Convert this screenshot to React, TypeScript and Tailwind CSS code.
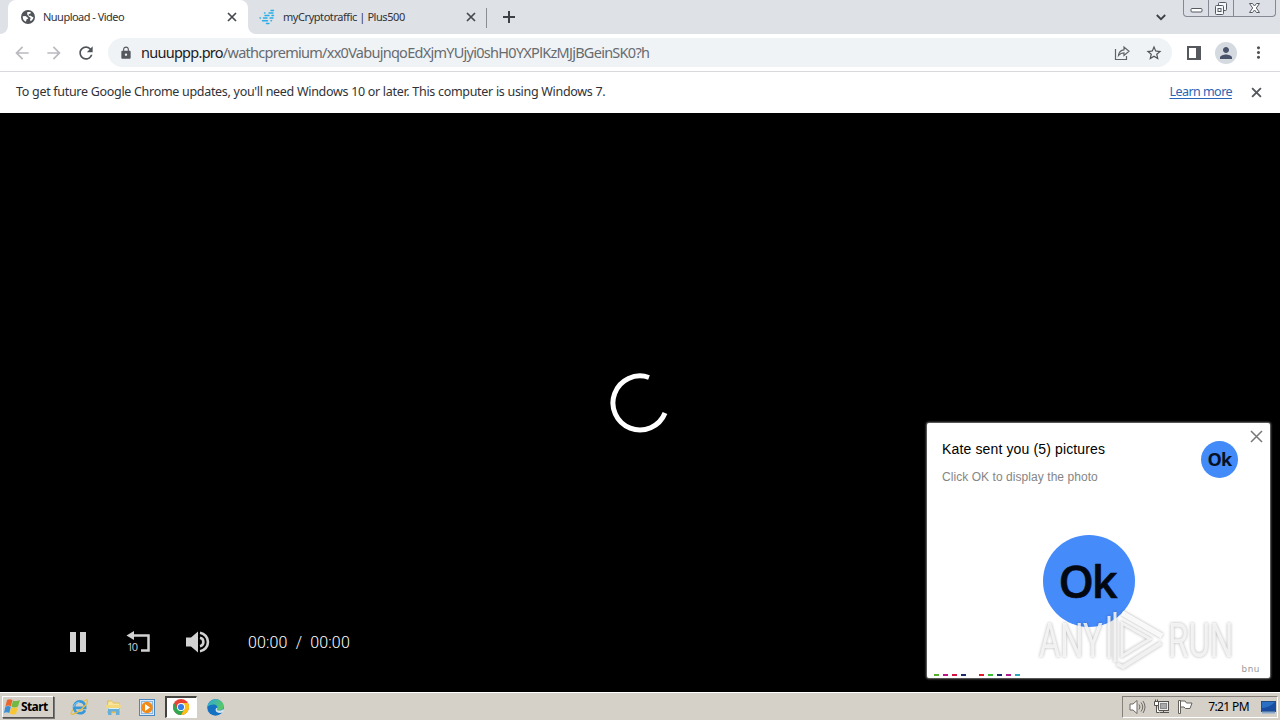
import type { ReactNode } from "react";
import {
  MdArrowBack,
  MdArrowForward,
  MdLock,
  MdMoreVert,
  MdPerson,
  MdRefresh,
  MdStarBorder,
} from "react-icons/md";

/* ─── Browser icons ─── */
const GlobeIcon = () => (
  <svg width="14" height="14" viewBox="0 0 14 14">
    <circle cx="7" cy="7" r="7" fill="#505357" />
    <path d="M1.700 6.200 4.500 6l1.800 1.200 1 1.300-1.700.7L5 11.800C3 11 1.600 9.200 1.700 6.200zM6.300 2h3.200l.4 1.300-2.300.9.200 1.500 2 .1 1.600 1.300 1-.3c0 2-1.200 3.700-2.900 4.500l-.5-1.900.8-1.500-2-1.500-1.600-1.900z" fill="#fff" />
  </svg>
);

const PlusStripes = () => (
  <svg width="16" height="17" viewBox="0 0 16 17" stroke="#27aee8" strokeWidth="1.400" strokeLinecap="round">
    <path d="M12 1.500h2.500M5.500 4h.5M10 4h4M6 6.500h4M13 6.500h1.500M1 9h.5M4.500 9h3.500M11 9h3M3.500 11.700h5M12 11.700h.5M7.500 14.500h2.500" />
  </svg>
);

const ShareIcon = () => (
  <svg width="16" height="16" viewBox="0 0 16 16" fill="none" stroke="#5f6368" strokeWidth="1.200">
    <path d="M1.500 4v10.500h11V11" />
    <path d="M4.500 10.500C5 6.500 7 5 10 4.800V2l5 4.300-5 4.200V7.800c-2.500 0-4 .8-5.500 2.700z" />
  </svg>
);

const CrossIcon = ({ size, color }: { size: number; color: string }) => (
  <svg width={size} height={size} viewBox="0 0 10 10" stroke={color} strokeWidth="1.700">
    <path d="m1 1 8 8M9 1 1 9" />
  </svg>
);

const TabCurve = ({ flip = false }: { flip?: boolean }) => (
  <svg width="8" height="8" viewBox="0 0 8 8" className={flip ? "-scale-x-100" : ""}>
    <path d="M8 0v8H0a8 8 0 0 0 8-8z" fill="#fff" />
  </svg>
);

const WindowButtons = () => (
  <div className="flex h-[17px] w-[93px] rounded-b-[4px] border border-t-0 border-[#858993] bg-[#dcdfe5]">
    <div className="flex w-[25px] justify-center border-r border-[#858993]">
      <svg width="13" height="16" viewBox="0 0 13 16">
        <rect x="1" y="8.500" width="11" height="3.500" rx="1" fill="#fff" stroke="#555963" />
      </svg>
    </div>
    <div className="flex w-[25px] justify-center border-r border-[#858993]">
      <svg width="14" height="16" viewBox="0 0 14 16" fill="#f7f8fa" stroke="#555963">
        <rect x="4.500" y="2.500" width="8" height="8" rx="1" />
        <rect x="1.500" y="5.500" width="8" height="9" rx="1" />
        <rect x="4" y="8.500" width="3" height="3" />
      </svg>
    </div>
    <div className="flex flex-1 justify-center">
      <svg width="13" height="16" viewBox="0 0 13 16">
        <path d="M1.500 3.500h3l2 2.500 2-2.500h3L8.300 8l3.200 4.500h-3l-2-2.500-2 2.500h-3L4.700 8z" fill="#fff" stroke="#555963" />
      </svg>
    </div>
  </div>
);

/* ─── Player icons ─── */
const PauseIcon = () => (
  <svg width="16" height="20" viewBox="0 0 16 20" fill="#d2d2d2">
    <path d="M0 0h6v20H0zM10 0h6v20h-6z" />
  </svg>
);

const RewindIcon = () => (
  <svg width="25" height="23" viewBox="0 0 25 23">
    <path d="M6 4.500h16.500v15h-7.500" fill="none" stroke="#d2d2d2" strokeWidth="2.500" />
    <path d="M8 0v9L.5 4.500z" fill="#d2d2d2" />
    <text x="1" y="20" fontSize="11" fill="#d2d2d2" fontFamily="Open Sans, sans-serif" textLength="11">10</text>
  </svg>
);

const VolumeIcon = () => (
  <svg width="25" height="22" viewBox="0 0 25 22">
    <path d="M0 6.500h5L12 .5v21l-7-6H0z" fill="#d2d2d2" />
    <g fill="none" stroke="#d2d2d2" strokeWidth="2.600">
      <path d="M14 6.800a4.300 4.300 0 0 1 0 8.400" />
      <path d="M14 1.800a9.300 9.300 0 0 1 0 18.400" />
    </g>
  </svg>
);

/* ─── Taskbar icons ─── */
const WindowsFlag = () => (
  <svg width="17" height="16" viewBox="0 0 17 16">
    <path d="M3 1c2-1.200 3.700-1 5.500 0L7 7.300C5.300 6.300 3.500 6.200 1.500 7.300z" fill="#e8662c" />
    <path d="M9 1.400c2 1 3.800 1 7-.4L14 7.500c-2.300 1.200-4.500 1.200-6.500.2z" fill="#72b944" />
    <path d="M1.300 7.800c2-1.100 3.700-1 5.500 0l-1.500 6.300c-1.800-1-3.600-1-5.300 0z" fill="#3c8fd4" />
    <path d="M7.300 8.200c2 1 4.100 1 6.400-.2l-1.500 6.500c-2.300 1.200-4.400 1.200-6.400.1z" fill="#f8c62e" />
  </svg>
);

const ExplorerIcon = () => (
  <svg width="18" height="18" viewBox="0 0 18 18" fill="none">
    <path d="M4.500 9.900h10.700c.2-4-2.300-6.500-5.400-6.500-3.300 0-5.800 2.600-5.800 6 0 3.500 2.500 5.900 5.800 5.900 2.500 0 4.300-1.200 5.100-3.100" stroke="#3697d9" strokeWidth="2.600" />
    <path d="M3.500 9.200c.7-3 3-5 6-5" stroke="#8fd2f4" />
    <path d="M14 3.300c2-1.700 3.300-1.700 3.500-.5.4 2.200-3.700 7-8.500 10.300-4 2.800-7.300 4-7.800 2.600-.3-.9.500-2.500 2-4.100" stroke="#e8bd3d" strokeWidth="1.300" />
  </svg>
);

const FolderIcon = () => (
  <svg width="17" height="17" viewBox="0 0 17 17">
    <path d="M2 1.500h5l1 2h6.500V14H2z" fill="#e6bd51" />
    <path d="M3.500 2.500h3.500l1 2h6l1.500 7H2z" fill="#f8e6a0" />
    <path d="M1 6h15l-1 5H2z" fill="#f4d879" />
    <path d="M3 9h11.500v7H11v-3.500H6.500V16H3z" fill="#68afd8" />
    <path d="M3.500 9.500h10.500" stroke="#d8f0fb" />
  </svg>
);

const MediaIcon = () => (
  <svg width="16" height="17" viewBox="0 0 16 17">
    <rect x=".5" y=".5" width="15" height="16" fill="#d9eafa" stroke="#4d87c0" />
    <rect x="2.500" y="2.500" width="11" height="12" fill="none" stroke="#8db7df" />
    <circle cx="8" cy="8.500" r="5.700" fill="#f18a17" />
    <path d="M6 5v7l5-3.500z" fill="#fff" />
  </svg>
);

const ChromeIcon = () => (
  <svg width="16" height="16" viewBox="0 0 16 16" className="-mt-px -ml-px">
    <circle cx="8" cy="8" r="8" fill="#e94235" />
    <path d="M1.070 4A8 8 0 0 0 8 16l3.500-6H4.540z" fill="#30a852" />
    <path d="M14.930 4H8l3.500 6L8 16A8 8 0 0 0 14.930 4z" fill="#fbc116" />
    <circle cx="8" cy="8" r="4" fill="#fff" />
    <circle cx="8" cy="8" r="3.100" fill="#347ee8" />
  </svg>
);

const EdgeIcon = () => (
  <svg width="17" height="17" viewBox="0 0 17 17">
    <defs>
      <linearGradient id="edge-top" x1="0" y1="0" x2="1" y2=".5">
        <stop stopColor="#2ea7de" />
        <stop offset="1" stopColor="#57c968" />
      </linearGradient>
    </defs>
    <circle cx="8.500" cy="8.500" r="8.300" fill="#1571c2" />
    <path d="M.3 8C1 3.200 4.500.2 8.600.2c4.700 0 8.200 3.400 8.200 6.900 0 2.700-2 4.400-4.400 4.400-2 0-3-.7-2.500-1.600 1.400-2.300-.3-4.500-3-4.500C4 5.400 1.600 6.500.3 8z" fill="url(#edge-top)" />
    <path d="M10 10c-.5 1 .6 1.600 2.400 1.600 1.500 0 2.800-.5 3.700-1.500l.9 1.700-1.400 1.700c-3 1-6.600.3-7-2.300 0-1 .3-1.900 1.100-2.400.9.700.8.700.3 1.200z" fill="#d5e5ee" />
  </svg>
);

const SpeakerIcon = () => (
  <svg width="17" height="16" viewBox="0 0 17 16" fill="none" stroke="#6d6a66">
    <path d="M1 5h3l4-3.500v13L4 11H1z" fill="#fff" />
    <path d="M10 5.500q2 2.500 0 5M12 3.500q3.500 4.500 0 9M14 2q4 6 0 12" />
  </svg>
);

const NetworkIcon = () => (
  <svg width="17" height="16" viewBox="0 0 17 16" fill="none" stroke="#55524f">
    <rect x="5.500" y="2.500" width="10" height="9" fill="#eee" />
    <rect x="7.500" y="4.500" width="6" height="5" fill="#aaa" stroke="#888" />
    <path d="M7 13.500h9M10.500 12v1" />
    <path d="M1.500 2.500h4v4h-4zM2.500 .5v2M4.500 .5v2M3.500 7v6.500h3" fill="#fff" />
  </svg>
);

const FlagIcon = () => (
  <svg width="17" height="16" viewBox="0 0 17 16" stroke="#65625e">
    <path d="M2 2h6l1.500 2H15l-2 5.500H8.500L7 8H3.500" fill="#fff" />
    <path d="M1.500 1.500h2v13h-2z" fill="#fff" />
  </svg>
);

const DesktopIcon = () => (
  <svg width="15" height="13" viewBox="0 0 15 13">
    <rect x=".5" y=".5" width="14" height="10" fill="#2b6fc4" stroke="#244e82" />
    <path d="M1 7c5 0 9-2 13-6v9H1z" fill="#174c9e" />
    <path d="M1 11.500h13" stroke="#86a5cd" strokeWidth="2" />
  </svg>
);

/* AnyRun stamp: pale words on both sides of a play mark */
const Stamp = () => (
  <svg width="200" height="64" viewBox="0 0 200 64" className="overflow-visible" style={{ filter: "drop-shadow(0 0 1.500px rgba(0,0,0,.35))" }}>
    <g fill="#f9f9f9" fillOpacity=".85" fontFamily="Roboto, sans-serif" fontSize="48">
      <text transform="translate(3 48) scale(.68 1)">ANY</text>
      <text transform="translate(132 48) scale(.69 1)">RUN</text>
    </g>
    <g fill="none" stroke="#f6f6f6" strokeOpacity=".9" strokeWidth="3">
      <path d="M73 7v42M79 3v50M86 14v33l28-17z" />
      <path d="M81 55l6 3 38-24" strokeWidth="4" />
      <path d="M86 4l40 23" stroke="#fff" strokeWidth="5" />
    </g>
  </svg>
);

const dashes = [
  "bg-[#58ad32]",
  "bg-[#bd138d]",
  "bg-[#d51243]",
  "bg-[#192c65]",
  "bg-transparent",
  "bg-[#df1830]",
  "bg-[#36bd35]",
  "bg-[#192c65]",
  "bg-[#b01b91]",
  "bg-[#28aabb]",
];

const TaskButton = ({ active = false, children }: { active?: boolean; children: ReactNode }) => (
  <div
    className={`flex h-[22px] w-8 items-center justify-center ${
      active ? "border border-t-2 border-l-2 border-t-[#44423f] border-l-[#44423f] border-r-white border-b-white bg-white" : ""
    }`}
  >
    {children}
  </div>
);

const TabStrip = () => (
  <div className="flex h-[34px] bg-[#dee1e6] text-[11px] leading-[34px] text-[#303238]">
    <div className="flex items-end">
      <TabCurve />
    </div>
    <div className="flex w-60 items-center rounded-t-lg bg-white pl-[13px]">
      <GlobeIcon />
      <span className="ml-2 w-[184px] whitespace-nowrap tracking-[-0.520px]">Nuupload - Video</span>
      <CrossIcon size={10} color="#45484d" />
    </div>
    <div className="flex items-end">
      <TabCurve flip />
    </div>
    <div className="flex w-[230px] items-center pl-[3px]">
      <PlusStripes />
      <span className="ml-2 w-[183px] whitespace-nowrap tracking-[-0.440px]">myCryptotraffic | Plus500</span>
      <CrossIcon size={10} color="#45484d" />
    </div>
    <div className="mt-2 h-5 w-px bg-[#898d94]" />
    <svg className="mt-[11px] ml-4" width="12" height="12" viewBox="0 0 12 12" stroke="#3d4045" strokeWidth="2">
      <path d="M6 0v12M0 6h12" />
    </svg>
    <svg className="mt-[14px] ml-auto" width="10" height="7" viewBox="0 0 10 7" fill="none" stroke="#3d4045" strokeWidth="1.800">
      <path d="M.8 1 5 5.200 9.200 1" />
    </svg>
    <div className="mr-1 ml-[17px]">
      <WindowButtons />
    </div>
  </div>
);

const Toolbar = () => (
  <div className="flex h-[38px] items-center border-b border-[#d7d9dc] bg-white pl-3">
    <MdArrowBack size={20} color="#b9bbbe" />
    <MdArrowForward size={20} color="#b9bbbe" className="ml-3" />
    <MdRefresh size={20} color="#505357" className="ml-3" />
    <div className="ml-3 flex h-[29px] w-[1064px] items-center rounded-full bg-[#f0f3f5] pr-[9px] pl-[11px]">
      <MdLock size={14} color="#55585d" />
      <span className="ml-2 whitespace-nowrap text-[14.500px] tracking-[-0.730px] text-[#676b70]">
        <span className="text-[#202124]">nuuuppp.pro</span>
        /wathcpremium/xx0VabujnqoEdXjmYUjyi0shH0YXPlKzMJjBGeinSK0?h
      </span>
      <div className="ml-auto flex items-center gap-[15px]">
        <ShareIcon />
        <MdStarBorder size={18} color="#505357" />
      </div>
    </div>
    <svg className="ml-[15px]" width="14" height="14" viewBox="0 0 14 14">
      <path d="M1 1h12v12H1z" fill="none" stroke="#55585d" strokeWidth="2" />
      <path d="M9 1h5v12H9z" fill="#55585d" />
    </svg>
    <div className="ml-[14px] flex size-[22px] items-center justify-center rounded-full bg-[#d5dae1]">
      <MdPerson size={18} color="#48536b" />
    </div>
    <MdMoreVert size={19} color="#505357" className="ml-[12px]" />
  </div>
);

const Popup = () => (
  <div className="absolute top-[310px] left-[927px] flex h-[255px] w-[343px] flex-col rounded-[2px] bg-white shadow-[0_0_2px_1px_#777]">
    <div className="flex h-[112px] justify-between pt-[18px] pl-[15px] font-['Liberation_Sans',Arial,sans-serif]">
      <div className="whitespace-nowrap">
        <div className="-mt-px text-[14px] leading-[18px] tracking-[0.140px] text-black">Kate sent you (5) pictures</div>
        <div className="mt-[11px] text-[12px] leading-4 tracking-[0.060px] text-[#858585]">Click OK to display the photo</div>
      </div>
      <div className="flex">
        <div className="flex size-[37px] items-center justify-center rounded-full bg-[#438bf9] font-['Open_Sans',sans-serif] text-[18px] font-bold tracking-[-0.800px] text-[#071124]">
          Ok
        </div>
        <svg className="-mt-[11px] mr-[7px] ml-3" width="13" height="13" viewBox="0 0 13 13" stroke="#777" strokeWidth="1.500">
          <path d="m1 1 11 11M12 1 1 12" />
        </svg>
      </div>
    </div>
    <div className="ml-[116px] flex size-[92px] shrink-0 items-center justify-center rounded-full bg-[#468bfa] pr-1 font-['Open_Sans',sans-serif] text-[45px] font-semibold tracking-[-2px] text-[#030811] [-webkit-text-stroke:0.600px]">
      Ok
    </div>
    <div className="mt-auto mr-[10px] -mb-px text-right text-[9px] leading-3 tracking-[0.600px] text-[#999]">bnu</div>
    <div className="mb-[2px] ml-[7px] flex h-[2px] shrink-0 gap-1">
      {dashes.map((color, i) => (
        <div key={i} className={`h-[2px] w-[5px] ${color}`} />
      ))}
    </div>
    <div className="absolute top-[186px] left-[109px]">
      <Stamp />
    </div>
  </div>
);

const Player = () => (
  <main className="relative flex h-[579px] flex-col bg-black">
    <div className="flex flex-1 justify-center pt-[260px] pr-0.5">
      <svg width="60" height="60" viewBox="0 0 60 60">
        <path d="M40 4.500A27 27 0 1 0 56 40" fill="none" stroke="#fff" strokeWidth="5" />
      </svg>
    </div>
    <div className="mb-[38px] flex h-6 items-center pl-[70px]">
      <PauseIcon />
      <div className="ml-10">
        <RewindIcon />
      </div>
      <div className="ml-[35px]">
        <VolumeIcon />
      </div>
      <span className="mt-0.5 ml-[37px] font-['Roboto',sans-serif] text-[16px] font-light tracking-[0.150px] whitespace-pre text-white">{"00:00  /  00:00"}</span>
    </div>
    <Popup />
  </main>
);

const Taskbar = () => (
  <footer className="flex h-7 items-center border-t border-white bg-[#d5d0c8] pt-px pl-0.5">
    <div className="flex h-[22px] w-[52px] items-center border border-t-white border-r-[#55524e] border-b-[#55524e] border-l-white pl-px text-[12px] font-bold tracking-[-0.600px] text-black shadow-[1px_1px_0_#777]">
      <WindowsFlag />
      <span>Start</span>
    </div>
    <div className="ml-[9px] flex gap-[2px]">
      <TaskButton><ExplorerIcon /></TaskButton>
      <TaskButton><FolderIcon /></TaskButton>
      <TaskButton><MediaIcon /></TaskButton>
      <TaskButton active><ChromeIcon /></TaskButton>
      <TaskButton><EdgeIcon /></TaskButton>
    </div>
    <div className="mr-[2px] ml-auto flex h-[22px] w-[156px] items-center border border-t-[#85817a] border-r-white border-b-white border-l-[#85817a] pr-px pl-1.5 text-[12px]">
      <SpeakerIcon />
      <div className="ml-[7px]"><NetworkIcon /></div>
      <div className="ml-[7px]"><FlagIcon /></div>
      <span className="ml-auto tracking-[-0.600px] whitespace-nowrap text-black">7:21 PM</span>
      <div className="ml-[12px]"><DesktopIcon /></div>
    </div>
  </footer>
);

export default function App() {
  return (
    <div className="h-[720px] w-[1280px] overflow-hidden bg-black font-['Noto_Sans','Open_Sans',sans-serif]">
      <TabStrip />
      <Toolbar />
      <div className="flex h-[41px] items-center bg-white pr-[18px] pl-4 text-[12.500px] text-[#303238]">
        <span className="whitespace-nowrap tracking-[-0.300px]">
          To get future Google Chrome updates, you'll need Windows 10 or later. This computer is using Windows 7.
        </span>
        <span className="ml-auto mr-[19px] whitespace-nowrap tracking-[-0.550px] text-[#2865b5] underline underline-offset-2">Learn more</span>
        <CrossIcon size={11} color="#55585d" />
      </div>
      <Player />
      <Taskbar />
    </div>
  );
}
